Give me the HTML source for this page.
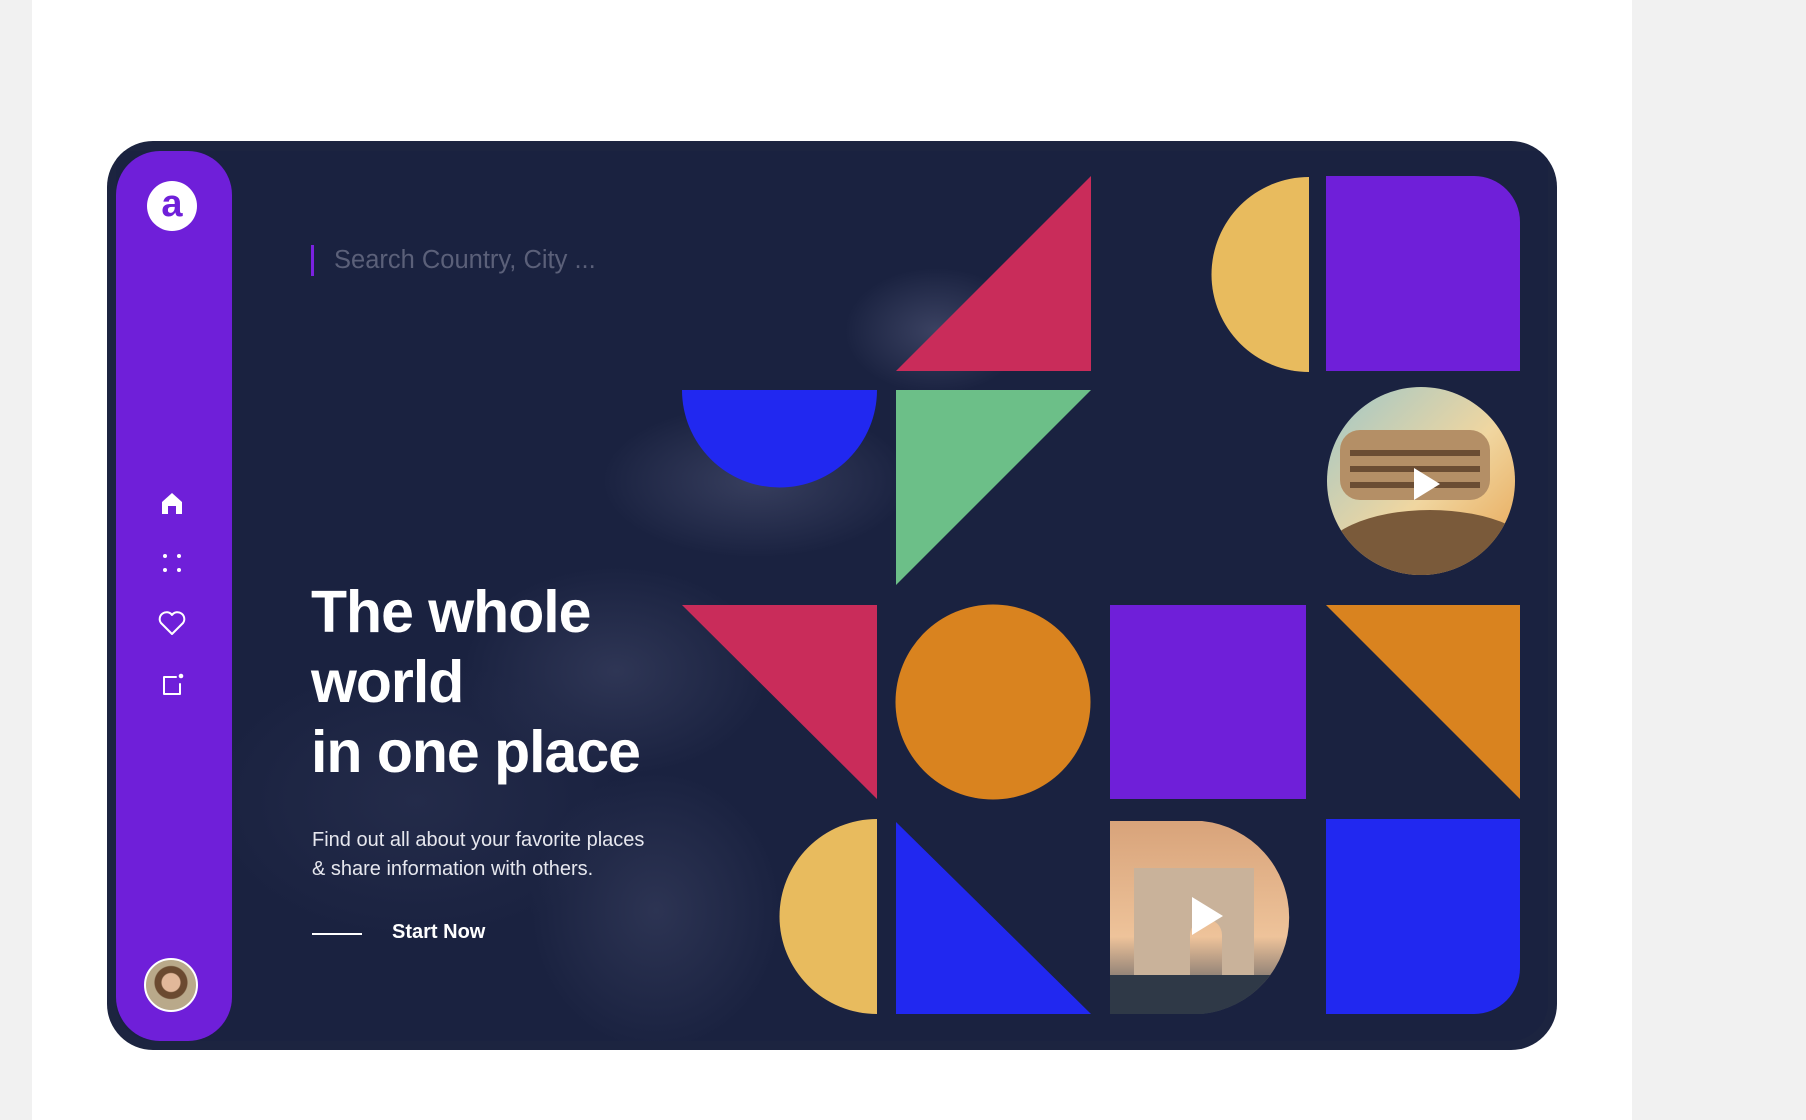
<!DOCTYPE html>
<html><head><meta charset="utf-8">
<style>
html,body{margin:0;padding:0;}
body{width:1806px;height:1120px;background:#f1f1f1;position:relative;overflow:hidden;font-family:"Liberation Sans",sans-serif;}
.white{position:absolute;left:32px;top:0;width:1600px;height:1120px;background:#fff;}
.frame{position:absolute;left:107px;top:141px;width:1450px;height:909px;border-radius:46px;background:#1c2440;overflow:hidden;}
.inner{position:absolute;left:9px;top:10px;right:9px;bottom:9px;border-radius:0 0 38px 38px;overflow:hidden;
background:
radial-gradient(ellipse 130px 90px at 820px 180px, rgba(120,125,160,.35), transparent 70%),
radial-gradient(ellipse 220px 110px at 640px 330px, rgba(110,115,150,.35), transparent 70%),
radial-gradient(ellipse 220px 150px at 500px 520px, rgba(100,105,140,.28), transparent 70%),
radial-gradient(ellipse 180px 200px at 540px 760px, rgba(100,105,140,.25), transparent 70%),
radial-gradient(ellipse 300px 200px at 300px 650px, rgba(90,95,130,.15), transparent 70%),
#1a2240;}
.side{position:absolute;left:116px;top:151px;width:116px;height:890px;background:#6f1fd9;border-radius:44px 44px 44px 44px;}
.logo{position:absolute;left:147px;top:181px;width:50px;height:50px;border-radius:50%;background:#fff;color:#6f1fd9;font-weight:bold;font-size:38px;line-height:46px;text-align:center;}
.search{position:absolute;left:311px;top:245px;width:3px;height:31px;background:#7b22e0;}
.stext{position:absolute;left:334px;top:246px;font-size:25.5px;color:#5b6079;}
h1{position:absolute;left:311px;top:577px;margin:0;color:#fff;font-size:59px;line-height:70px;font-weight:bold;letter-spacing:-1px;}
.p{position:absolute;left:312px;top:826px;color:#e6e7ee;font-size:20px;line-height:29px;}
.line{position:absolute;left:312px;top:933px;width:50px;height:2px;background:#fff;}
.start{position:absolute;left:392px;top:921px;color:#fff;font-size:20px;font-weight:bold;}
.av{position:absolute;left:144px;top:958px;width:54px;height:54px;border-radius:50%;border:2px solid #fff;box-sizing:border-box;background:radial-gradient(circle at 50% 45%,#e2b89a 0 9px,#6b4a30 10px 16px,#b9a98a 17px);}
</style></head><body>
<div class="white"></div>
<div class="frame"><div class="inner"></div></div>
<div class="side"></div>
<div class="logo">a</div>
<svg style="position:absolute;left:0;top:0" width="1806" height="1120">
<path d="M162 514 V502 L172 493 L182 502 V514 H176 V506 H168 V514 Z" fill="#fff"/>
<circle cx="165" cy="556" r="2" fill="#fff"/><circle cx="179" cy="556" r="2" fill="#fff"/>
<circle cx="165" cy="570" r="2" fill="#fff"/><circle cx="179" cy="570" r="2" fill="#fff"/>
<path d="M172 634 L161 623 A6 6 0 0 1 172 615 A6 6 0 0 1 183 623 Z" fill="none" stroke="#fff" stroke-width="2" stroke-linejoin="round"/>
<path d="M176 677 H164 V694 H180 V684" fill="none" stroke="#fff" stroke-width="2" stroke-linejoin="round" stroke-linecap="round"/>
<circle cx="181" cy="676" r="2.3" fill="#fff"/>
<defs>
<clipPath id="c1"><circle cx="1421" cy="481" r="94"/></clipPath>
<clipPath id="c2"><path d="M1110 821 H1202 A97 97 0 0 1 1202 1014 H1110 Z"/></clipPath>
<linearGradient id="g1" x1="0" y1="0" x2="1" y2="1"><stop offset="0" stop-color="#9fc7c8"/><stop offset=".55" stop-color="#f0d6a0"/><stop offset="1" stop-color="#e7a24e"/></linearGradient>
<linearGradient id="g2" x1="0" y1="0" x2="0" y2="1"><stop offset="0" stop-color="#d8a37a"/><stop offset=".6" stop-color="#eec39a"/><stop offset="1" stop-color="#3b4656"/></linearGradient>
</defs>
<polygon points="896,371 1091,176 1091,371" fill="#c92c5a"/>
<path d="M1309 177 A97 97 0 0 0 1309 372 Z" fill="#e8bb5e"/>
<path d="M1326 176 H1474 A46 46 0 0 1 1520 222 V371 H1326 Z" fill="#6f1fd9"/>
<path d="M682 390 H877 A97.5 97.5 0 0 1 682 390 Z" fill="#2128f0"/>
<polygon points="896,390 1091,390 896,585" fill="#6cbf88"/>
<g clip-path="url(#c1)">
<rect x="1327" y="387" width="188" height="188" fill="url(#g1)"/>
<rect x="1340" y="430" width="150" height="70" rx="20" fill="#b48f66"/>
<g fill="#6b4d33"><rect x="1350" y="450" width="130" height="6"/><rect x="1350" y="466" width="130" height="6"/><rect x="1350" y="482" width="130" height="6"/></g>
<ellipse cx="1430" cy="560" rx="110" ry="50" fill="#7a5a3a"/>
</g>
<polygon points="1414,468 1414,500 1440,484" fill="#fff"/>
<polygon points="682,605 877,605 877,799" fill="#c92c5a"/>
<circle cx="993" cy="702" r="97.5" fill="#d9831f"/>
<rect x="1110" y="605" width="196" height="194" fill="#6f1fd9"/>
<polygon points="1326,605 1520,605 1520,799" fill="#d9831f"/>
<path d="M877 819 A97 97 0 0 0 877 1014 Z" fill="#e8bb5e"/>
<polygon points="896,822 896,1014 1091,1014" fill="#2128f0"/>
<g clip-path="url(#c2)">
<rect x="1110" y="821" width="200" height="193" fill="url(#g2)"/>
<path d="M1134 975 V868 H1254 V975 H1222 V935 A16 16 0 0 0 1190 935 V975 Z" fill="#c9b29a"/>
<rect x="1110" y="975" width="200" height="39" fill="#2f3947"/>
</g>
<polygon points="1192,897 1192,935 1223,916" fill="#fff"/>
<path d="M1326 819 H1520 V968 A46 46 0 0 1 1474 1014 H1326 Z" fill="#2128f0"/>
</svg>
<div class="search"></div>
<div class="stext">Search Country, City ...</div>
<h1>The whole<br>world<br>in one place</h1>
<div class="p">Find out all about your favorite places<br>&amp; share information with others.</div>
<div class="line"></div>
<div class="start">Start Now</div>
<div class="av"></div>
</body></html>
